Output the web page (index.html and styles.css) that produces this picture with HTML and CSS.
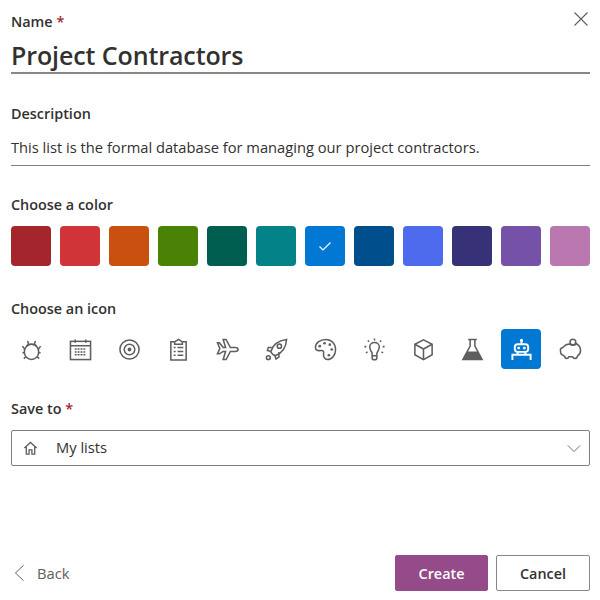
FILE: index.html
```html
<!DOCTYPE html>
<html lang="en" dir="ltr">
<head>
    <meta charset="utf-8">
    <title>Create list</title>
    <link rel="stylesheet" href="styles.css">
</head>
<body>
    <div class="panel">
        <button class="close" aria-label="Close">
            <svg width="16" height="16" viewBox="0 0 16 16"><path d="M1.500 1.500L14.500 14.500M14.500 1.500L1.500 14.500" /></svg>
        </button>

        <div class="label name-label">Name <span class="req">*</span></div>
        <div class="title-field">Project Contractors</div>

        <div class="label desc-label">Description</div>
        <div class="desc-field">This list is the formal database for managing our project contractors.</div>

        <div class="label color-label">Choose a color</div>
        <div class="swatches">
            <div class="swatch c-red-dark"></div>
            <div class="swatch c-red"></div>
            <div class="swatch c-orange"></div>
            <div class="swatch c-green"></div>
            <div class="swatch c-teal-dark"></div>
            <div class="swatch c-teal"></div>
            <div class="swatch c-blue">
                <svg width="16" height="16" viewBox="0 0 16 16"><path d="M2.500 8.500L6 12L13.500 4.500" /></svg>
            </div>
            <div class="swatch c-blue-dark"></div>
            <div class="swatch c-indigo"></div>
            <div class="swatch c-navy"></div>
            <div class="swatch c-purple"></div>
            <div class="swatch c-pink"></div>
        </div>

        <div class="label icon-label">Choose an icon</div>
        <div class="icons">
            <!-- bug -->
            <div class="icon"><svg viewBox="0 0 24 24">
                <ellipse cx="12" cy="14.500" rx="7.500" ry="8" />
                <path d="M7 8.500C7.500 7 9.500 6.500 12 6.500S16.500 7 17 8.500M9 6.800L8 3M15 6.800L16 3M4.800 11.500L2.500 8.500M19.200 11.500L21.500 8.500M4.500 15.500H2.500M19.500 15.500H21.500M6 19.500L4 21.500M18 19.500L20 21.500" />
            </svg></div>
            <!-- calendar -->
            <div class="icon"><svg viewBox="0 0 24 24">
                <rect x="1.500" y="3.500" width="21" height="19" />
                <path d="M1.500 8H22.500M6.500 1.500V5M17.500 1.500V5" />
                <path class="dots" d="M6 11.500H18M6 14.500H18M6 17.500H18" />
            </svg></div>
            <!-- target -->
            <div class="icon"><svg viewBox="0 0 24 24">
                <circle cx="12" cy="12" r="10" />
                <circle cx="12" cy="12" r="5.500" />
                <circle class="solid" cx="12" cy="12" r="2" />
            </svg></div>
            <!-- clipboard -->
            <div class="icon"><svg viewBox="0 0 24 24">
                <path d="M8 4H4V23H20V4H16" />
                <path d="M8 6.500V4L12 1.500L16 4V6.500Z" />
                <path d="M7 10H9M11 10H17M7 14H9M11 14H17M7 18H9M11 18H17" />
            </svg></div>
            <!-- plane -->
            <div class="icon"><svg viewBox="0 0 24 24">
                <path d="M1.500 5L4 11L1.500 16.500H3.500L7.500 14H10L7.500 22.500H10.500L15 14H20C22 14 23 13 23 12S22 10 20 10H15L10.500 1.500H7.500L10 10H7.500L3.500 5Z" />
            </svg></div>
            <!-- rocket -->
            <div class="icon"><svg viewBox="0 0 24 24">
                <path d="M8 17L6 14.500C8 7 14 2.500 22.500 1.500C22 10 17.500 16 10.500 18.500Z" />
                <path d="M7 10H3.500L2.500 13L6.500 14M14.500 14.500V20L11.500 22L10.500 18.500" />
                <circle cx="15" cy="8.500" r="2.200" />
                <circle cx="3.500" cy="20.500" r="2" />
            </svg></div>
            <!-- palette -->
            <div class="icon"><svg viewBox="0 0 24 24">
                <path d="M12.500 1.500C6 1.500 1.500 5.500 1.500 10C1.500 13 4 13.500 7 13C9.500 12.700 10.500 14 10 16C9.500 19.500 11 22.500 14 22.500C19 22.500 22.500 17.500 22.500 12C22.500 6 18 1.500 12.500 1.500Z" />
                <circle class="solid" cx="6" cy="8.500" r="1.400" />
                <circle class="solid" cx="11" cy="5.500" r="1.400" />
                <circle class="solid" cx="16.500" cy="7" r="1.400" />
                <circle class="solid" cx="18.500" cy="12" r="1.400" />
                <circle class="solid" cx="15.500" cy="18" r="1.400" />
            </svg></div>
            <!-- bulb -->
            <div class="icon"><svg viewBox="0 0 24 24">
                <path d="M9.500 18.500V16C9.500 14.500 7 13 7 9.500C7 6.800 9.200 4.800 12 4.800S17 6.800 17 9.500C17 13 14.500 14.500 14.500 16V18.500ZM9.500 20.500C9.500 22 10.500 22.800 12 22.800S14.500 22 14.500 20.500V18.500H9.500Z" />
                <path d="M12 .5V2.500M5 2.500L6.300 4M19 2.500L17.700 4M1.500 9H3.500M20.500 9H22.500M3 15.500L4.800 14.500M21 15.500L19.200 14.500" />
            </svg></div>
            <!-- cube -->
            <div class="icon"><svg viewBox="0 0 24 24">
                <path d="M12 2L21 6.500V17.500L12 22.500L3 17.500V6.500Z" />
                <path d="M3 6.500L12 11.500L21 6.500M12 11.500V22.500" />
            </svg></div>
            <!-- flask -->
            <div class="icon"><svg viewBox="0 0 24 24">
                <path class="solid" d="M6.500 14H17.500L22 22.500H2Z" />
                <path d="M7.500 1.500H16.500M9.500 1.500V8.500L2 22.500H22L14.500 8.500V1.500" />
            </svg></div>
            <!-- robot, selected -->
            <div class="icon on"><svg viewBox="0 0 24 24">
                <path d="M12 3V6.500" />
                <circle class="solid" cx="12" cy="2.500" r="1.600" />
                <rect x="5" y="6.500" width="14" height="8" rx="3" />
                <circle class="solid" cx="9" cy="10.500" r="1.500" />
                <circle class="solid" cx="15" cy="10.500" r="1.500" />
                <path d="M2.500 23V17.500H21.500V23M8 14.500V17.500M16 14.500V17.500" />
            </svg></div>
            <!-- piggy bank -->
            <div class="icon"><svg viewBox="0 0 24 24">
                <path d="M1.500 11.500C2 10.500 4 10.500 5 9C6.500 7 8.500 6.300 10.800 6.200C12.800 8 16.500 8 18.300 6C20.800 7.500 22.500 9.500 22.500 13C22.500 15.500 21 17.500 19.500 18.500C19 20.500 18 21.500 16.500 21.500C15 21.500 14.500 20.500 14 19.500H10.500C10 20.500 9.500 21.500 8 21.500C6.500 21.500 6 20.500 5.800 19C4 18.500 3 17 2 16.500C1.500 15 1.500 13 1.500 11.500Z" />
                <circle cx="14.500" cy="4.300" r="3" />
            </svg></div>
        </div>

        <div class="label save-label">Save to <span class="req">*</span></div>
        <div class="select">
            <svg class="home" viewBox="0 0 16 16"><path d="M1.500 7.500L8 1.500L14.500 7.500M3.500 6V14H6.500V9.500H9.500V14H12.500V6" /></svg>
            <span class="select-text">My lists</span>
            <svg class="chevron" viewBox="0 0 16 10"><path d="M1 1.500L8 8.500L15 1.500" /></svg>
        </div>

        <div class="footer">
            <div class="back">
                <svg viewBox="0 0 12 20"><path d="M10.500 1.500L1.500 10L10.500 18.500" /></svg>
                <span>Back</span>
            </div>
            <div class="actions">
                <button class="btn primary">Create</button>
                <button class="btn">Cancel</button>
            </div>
        </div>
    </div>
</body>
</html>
```
FILE: styles.css
```css
html, body {
    margin: 0;
    height: 100%;
    background: #fff;
}
.panel {
    position: relative;
    box-sizing: border-box;
    height: 600px;
    padding: 13px 10px 9px 11px;
    display: flex;
    flex-direction: column;
    font-family: "Open Sans", "Noto Sans", sans-serif;
    color: #323130;
}
svg {
    fill: none;
    stroke: #605e5c;
    stroke-width: 1.400;
}
svg .solid {
    fill: #605e5c;
    stroke: none;
}
.close {
    position: absolute;
    top: 11px;
    right: 11px;
    padding: 0;
    border: 0;
    background: none;
    line-height: 0;
}
.close svg {
    stroke-width: 1.100;
}
.label {
    padding: 1px 0;
    font-size: 14.400px;
    line-height: 16px;
    font-weight: 600;
}
.req {
    color: #a4262c;
}
.title-field {
    margin-top: 6px;
    height: 35px;
    line-height: 37px;
    font-size: 25px;
    font-weight: 600;
    letter-spacing: -.1px;
    border-bottom: 2px solid #8a8886;
}
.desc-label {
    margin-top: 31px;
}
.desc-field {
    margin-top: 12px;
    height: 30px;
    line-height: 24px;
    font-size: 14.700px;
    border-bottom: 1px solid #7f7f7f;
}
.color-label {
    margin-top: 30px;
}
.swatches {
    margin-top: 12px;
    display: flex;
    justify-content: space-between;
}
.swatch {
    width: 40px;
    height: 40px;
    border-radius: 4px;
    display: flex;
    align-items: center;
    justify-content: center;
}
.swatch svg {
    stroke: #fff;
    stroke-width: 1.200;
}
.c-red-dark { background: #a4262c; }
.c-red { background: #d13438; }
.c-orange { background: #ca5010; }
.c-green { background: #498205; }
.c-teal-dark { background: #005e50; }
.c-teal { background: #038387; }
.c-blue { background: #0078d4; }
.c-blue-dark { background: #004e8c; }
.c-indigo { background: #4f6bed; }
.c-navy { background: #373277; }
.c-purple { background: #7551a8; }
.c-pink { background: #ba77b0; }
.icon-label {
    margin-top: 34px;
}
.icons {
    margin-top: 11px;
    display: flex;
    justify-content: space-between;
}
.icon {
    width: 40px;
    height: 40px;
    border-radius: 4px;
    display: flex;
    align-items: center;
    justify-content: center;
}
.icon svg {
    width: 23px;
    height: 23px;
    stroke-width: 1.600;
}
.icon .dots {
    stroke-width: 1.600;
    stroke-dasharray: 2 1;
}
.icon.on {
    background: #0078d4;
}
.icon.on svg {
    stroke: #fff;
    stroke-width: 2;
}
.icon.on svg .solid {
    fill: #fff;
}
.save-label {
    margin-top: 31px;
}
.select {
    margin-top: 12px;
    box-sizing: border-box;
    height: 36px;
    padding: 0 8px 0 11px;
    display: flex;
    align-items: center;
    border: 1px solid #7f7f7f;
    border-radius: 2px;
    font-size: 14.700px;
}
.home {
    width: 15px;
    height: 15px;
    stroke-width: 1.400;
}
.select-text {
    margin-left: 18px;
    padding-bottom: 2px;
    flex: 1;
}
.chevron {
    width: 14px;
    height: 9px;
    stroke-width: 1;
}
.footer {
    margin-top: auto;
    display: flex;
    align-items: center;
    justify-content: space-between;
}
.back {
    margin-left: 3px;
    display: flex;
    align-items: center;
    gap: 12px;
    font-size: 14.700px;
    color: #605e5c;
}
.back svg {
    width: 11px;
    height: 18px;
    stroke-width: 1.100;
}
.actions {
    display: flex;
    gap: 8px;
}
.btn {
    box-sizing: border-box;
    width: 94px;
    height: 36px;
    padding: 0;
    background: #fff;
    border: 1px solid #8a8886;
    border-radius: 2px;
    font-family: inherit;
    font-size: 14.400px;
    font-weight: 600;
    color: #323130;
}
.btn.primary {
    width: 93px;
    background: #954a8a;
    border-color: #954a8a;
    color: #fff;
}
```
